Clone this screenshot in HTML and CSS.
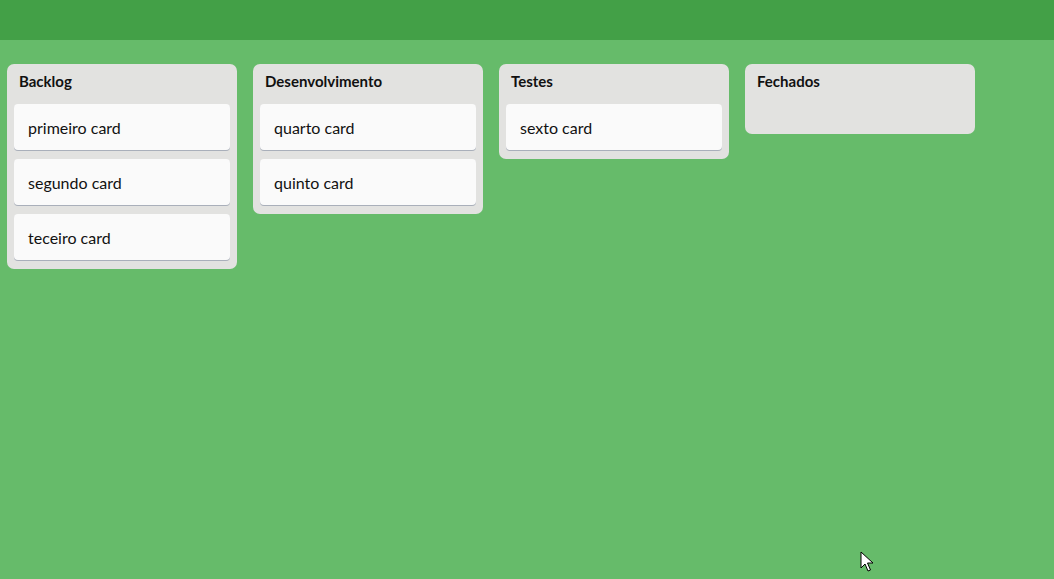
FILE: index.html
```html
<!DOCTYPE html>
<html lang="pt">
<head>
<meta charset="utf-8">
<title>Board</title>
<link rel="stylesheet" href="styles.css">
</head>
<body>
<header class="topbar"></header>
<main class="board">
  <section class="list">
    <h2 class="list-title">Backlog</h2>
    <div class="cards">
      <div class="card">primeiro card</div>
      <div class="card">segundo card</div>
      <div class="card">teceiro card</div>
    </div>
  </section>
  <section class="list">
    <h2 class="list-title">Desenvolvimento</h2>
    <div class="cards">
      <div class="card">quarto card</div>
      <div class="card">quinto card</div>
    </div>
  </section>
  <section class="list">
    <h2 class="list-title">Testes</h2>
    <div class="cards">
      <div class="card">sexto card</div>
    </div>
  </section>
  <section class="list">
    <h2 class="list-title">Fechados</h2>
    <div class="cards"></div>
  </section>
</main>
<svg class="cursor" width="14" height="22" viewBox="0 0 14 22" aria-hidden="true">
  <path d="M1 1 L1 17 L5 13 L8 20 L10.5 19 L7.5 12 L13 12 Z" fill="#fff" stroke="#000" stroke-width="1" stroke-linejoin="miter"/>
</svg>
</body>
</html>
```

FILE: styles.css
```css
* { box-sizing: border-box; }
html, body {
  margin: 0;
  padding: 0;
  height: 100%;
}
body {
  background: #66bb6a;
  font-family: Lato, "Open Sans", "Liberation Sans", sans-serif;
  color: #111;
  overflow: hidden;
  position: relative;
}
.topbar {
  height: 40px;
  background: #43a047;
}
.board {
  display: flex;
  align-items: flex-start;
  gap: 16px;
  padding: 24px 7px;
}
.list {
  width: 230px;
  flex: none;
  background: #e2e2e0;
  border-radius: 7px;
  padding: 0 7px 8px;
}
.list-title {
  margin: 0;
  font-size: 15px;
  font-weight: 700;
  line-height: 20px;
  padding: 7px 5px 13px;
  color: #111;
}
.cards {
  display: flex;
  flex-direction: column;
  gap: 8px;
  min-height: 22px;
}
.card {
  background: #fafafa;
  border-radius: 4px;
  box-shadow: 0 1px 0 #a9afba;
  font-size: 16px;
  line-height: 20px;
  padding: 14px 14px 12px;
  height: 46px;
  margin-bottom: 1px;
  color: #111;
}
.cursor {
  position: absolute;
  left: 860px;
  top: 551px;
}
```
